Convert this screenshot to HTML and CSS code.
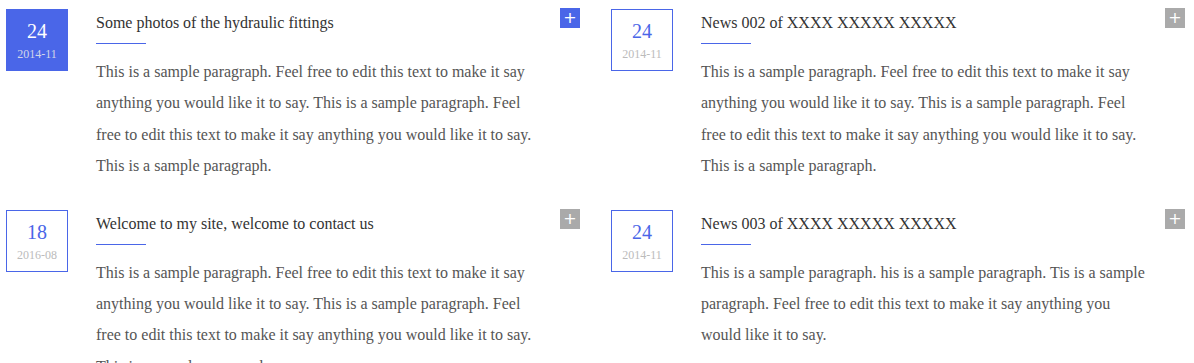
FILE: index.html
```html
<!DOCTYPE html>
<html lang="en">
<head>
  <meta charset="UTF-8">
  <meta name="viewport" content="width=device-width, initial-scale=1.0">
  <title>News</title>
  <link rel="stylesheet" href="styles.css">
</head>
<body>

<div class="news-list">

  <div class="news-item active">
    <div class="news-date">
      <span class="day">24</span>
      <span class="month">2014-11</span>
    </div>
    <div class="news-body">
      <h3>Some photos of the hydraulic fittings</h3>
      <p>This is a sample paragraph. Feel free to edit this text to make it say anything you would like it to say. This is a sample paragraph. Feel free to edit this text to make it say anything you would like it to say. This is a sample paragraph.</p>
    </div>
    <a class="more" href="#">+</a>
  </div>

  <div class="news-item">
    <div class="news-date">
      <span class="day">24</span>
      <span class="month">2014-11</span>
    </div>
    <div class="news-body">
      <h3>News 002 of XXXX XXXXX XXXXX</h3>
      <p>This is a sample paragraph. Feel free to edit this text to make it say anything you would like it to say. This is a sample paragraph. Feel free to edit this text to make it say anything you would like it to say. This is a sample paragraph.</p>
    </div>
    <a class="more" href="#">+</a>
  </div>

  <div class="news-item">
    <div class="news-date">
      <span class="day">18</span>
      <span class="month">2016-08</span>
    </div>
    <div class="news-body">
      <h3>Welcome to my site, welcome to contact us</h3>
      <p>This is a sample paragraph. Feel free to edit this text to make it say anything you would like it to say. This is a sample paragraph. Feel free to edit this text to make it say anything you would like it to say. This is a sample paragraph.</p>
    </div>
    <a class="more" href="#">+</a>
  </div>

  <div class="news-item">
    <div class="news-date">
      <span class="day">24</span>
      <span class="month">2014-11</span>
    </div>
    <div class="news-body">
      <h3>News 003 of XXXX XXXXX XXXXX</h3>
      <p>This is a sample paragraph. his is a sample paragraph. Tis is a sample paragraph. Feel free to edit this text to make it say anything you would like it to say.</p>
    </div>
    <a class="more" href="#">+</a>
  </div>

</div>

</body>
</html>
```

FILE: styles.css
```css
body {
  margin: 0;
  padding: 0;
  background-color: #fff;
  font-family: "Liberation Serif", "Times New Roman", serif;
}
.news-list {
  display: grid;
  grid-template-columns: 1fr 1fr;
  column-gap: 31px;
  row-gap: 28px;
  padding: 9px 9px 0 6px;
}
.news-item {
  display: flex;
  align-items: flex-start;
}
.news-date {
  width: 60px;
  height: 60px;
  border: 1px solid #4a66e8;
  display: flex;
  flex-direction: column;
  align-items: center;
  flex-shrink: 0;
}
.news-date .day {
  margin-top: 9px;
  font-size: 20px;
  line-height: 24px;
  color: #4a66e8;
}
.news-date .month {
  margin-top: 4px;
  font-size: 12px;
  line-height: 14px;
  color: #bbb;
}
.news-item.active .news-date {
  background-color: #4a66e8;
}
.news-item.active .day {
  color: #fff;
}
.news-item.active .month {
  color: #d2d6e8;
}
.news-body {
  width: 450px;
  margin-left: 28px;
}
.news-body h3 {
  margin: 0;
  font-size: 16px;
  font-weight: normal;
  line-height: 27px;
  color: #333;
}
.news-body h3::after {
  content: "";
  display: block;
  width: 50px;
  height: 1px;
  margin-top: 7px;
  background-color: #4a66e8;
}
.news-body p {
  margin: 12px 0 0;
  font-size: 16px;
  line-height: 31.4px;
  color: #555;
}
.more {
  width: 20px;
  height: 20px;
  margin-left: 14px;
  margin-top: -1px;
  flex-shrink: 0;
  background-color: #aaa;
  color: #fff;
  font-family: "DejaVu Sans", sans-serif;
  font-size: 16px;
  line-height: 19px;
  text-align: center;
  text-decoration: none;
}
.news-item.active .more {
  background-color: #4a66e8;
}
```
